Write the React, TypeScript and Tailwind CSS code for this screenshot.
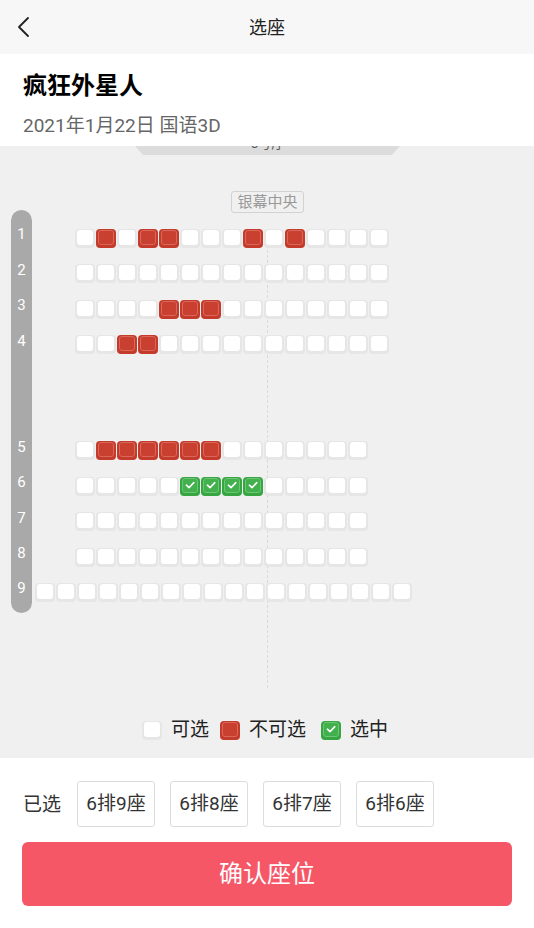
import React from 'react';

type SeatState = 0 | 1 | 2;

interface RowDef {
  label: string;
  count: number;
  sold?: number[];
  picked?: number[];
  wide?: boolean;
}

const rows: RowDef[] = [
  { label: '1', count: 15, sold: [1, 3, 4, 8, 10] },
  { label: '2', count: 15 },
  { label: '3', count: 15, sold: [4, 5, 6] },
  { label: '4', count: 15, sold: [2, 3] },
  { label: '5', count: 14, sold: [1, 2, 3, 4, 5, 6] },
  { label: '6', count: 14, picked: [5, 6, 7, 8] },
  { label: '7', count: 14 },
  { label: '8', count: 14 },
  { label: '9', count: 18, wide: true },
];

const selected = ['6排9座', '6排8座', '6排7座', '6排6座'];

function Check() {
  return (
    <svg width="12" height="12" viewBox="0 0 12 12" fill="none">
      <path d="M2.4 6.2 L5 8.7 L9.8 3.6" stroke="#ffffff" strokeWidth="1.6" strokeLinecap="round" strokeLinejoin="round" />
    </svg>
  );
}

function Seat({ state }: { state: SeatState }) {
  if (state === 1) {
    return (
      <div className="w-[20px] h-[19px] rounded-[4px] bg-[#c43a2b] flex justify-center pt-[1px]">
        <div className="w-[16px] h-[15px] rounded-[3px] bg-[#c93f30] border border-[#d9685a]" />
      </div>
    );
  }
  if (state === 2) {
    return (
      <div className="w-[20px] h-[19px] rounded-[4px] bg-[#36a542] flex justify-center pt-[1px]">
        <div className="w-[16px] h-[15px] rounded-[3px] bg-[#41b04d] border border-[#6cc675] flex items-center justify-center">
          <Check />
        </div>
      </div>
    );
  }
  return (
    <div className="w-[20px] h-[19px] rounded-[4px] bg-[#e6e6e6] flex justify-center pt-[1px]">
      <div className="w-[16px] h-[15px] rounded-[3px] bg-white" />
    </div>
  );
}

function SeatRow({ row }: { row: RowDef }) {
  const seats: SeatState[] = Array.from({ length: row.count }, (_, i) => {
    if (row.sold?.includes(i)) return 1;
    if (row.picked?.includes(i)) return 2;
    return 0;
  });
  return (
    <div className={`h-[35.4px] flex gap-[1px] ${row.wide ? 'pl-[35px]' : 'pl-[75px]'}`}>
      {seats.map((s, i) => (
        <Seat key={i} state={s} />
      ))}
    </div>
  );
}

export default function App() {
  const top = rows.slice(0, 4);
  const bottom = rows.slice(4);

  return (
    <div
      className="w-[534px] h-[928px] bg-white flex flex-col overflow-hidden text-[#222]"
      style={{ fontFamily: 'Roboto, "Noto Sans CJK SC", sans-serif' }}
    >
      {/* nav bar */}
      <div className="h-[54px] bg-[#f7f7f7] flex items-center relative shrink-0">
        <button className="pl-[15px] pr-2 h-full flex items-center">
          <svg width="16" height="22" viewBox="0 0 16 22" fill="none">
            <path d="M13 2 L4 11 L13 20" stroke="#222" strokeWidth="1.8" strokeLinecap="round" strokeLinejoin="round" />
          </svg>
        </button>
        <div className="absolute inset-0 flex items-center justify-center text-[18px] pointer-events-none">选座</div>
      </div>

      {/* movie info */}
      <div className="h-[92px] px-[23px] pt-[14px] shrink-0">
        <div className="text-[24px] font-bold leading-[36px] text-black">疯狂外星人</div>
        <div className="text-[19px] leading-[28px] mt-[8px] text-[#666]">2021年1月22日 国语3D</div>
      </div>

      {/* seat map */}
      <div className="h-[612px] bg-[#f0f0f0] relative flex flex-col items-stretch shrink-0">
        <div className="flex justify-center">
          <div className="w-[265px] h-[9px] bg-[#dcdcdc] overflow-hidden [clip-path:polygon(0_0,100%_0,97%_100%,3%_100%)] flex justify-center ml-[1px]">
            <span className="text-[13px] leading-[16px] -mt-[10px] text-[#555]">5号厅</span>
          </div>
        </div>

        <div className="flex justify-center mt-[36px] pl-[1px]">
          <div className="h-[22px] w-[73px] border border-[#d2d2d2] rounded-[3px] text-[15px] leading-[20px] text-[#999] text-center">
            银幕中央
          </div>
        </div>

        {/* center line */}
        <div className="absolute left-[267px] top-[99px] h-[443px] border-l border-dashed border-[#dadada]" />

        {/* row labels */}
        <div className="absolute left-[11px] top-[64px] w-[21px] h-[403px] rounded-full bg-[#a9a9a9] flex flex-col pt-[7px] text-white text-[15px] items-center">
          {top.map((r) => (
            <div key={r.label} className="h-[35.4px] flex items-center">{r.label}</div>
          ))}
          <div className="h-[70.8px]" />
          {bottom.map((r) => (
            <div key={r.label} className="h-[35.4px] flex items-center">{r.label}</div>
          ))}
        </div>

        <div className="relative mt-[16px] flex flex-col">
          {top.map((r) => (
            <SeatRow key={r.label} row={r} />
          ))}
          <div className="h-[70.8px]" />
          {bottom.map((r) => (
            <SeatRow key={r.label} row={r} />
          ))}
        </div>

        {/* legend */}
        <div className="mt-auto mb-[16px] flex items-center justify-center gap-[9px] text-[19px] leading-[24px] text-[#222] pr-[4px]">
          <Seat state={0} />
          <span className="mr-[2px]">可选</span>
          <Seat state={1} />
          <span className="mr-[6px]">不可选</span>
          <Seat state={2} />
          <span>选中</span>
        </div>
      </div>

      {/* bottom */}
      <div className="flex-1 bg-white px-[22px] pt-[23px]">
        <div className="flex items-center">
          <span className="text-[19px] text-[#333] w-[55px] pl-[1px] pt-[2px]">已选</span>
          <div className="flex gap-[15px]">
            {selected.map((s) => (
              <div
                key={s}
                className="h-[46px] w-[78px] border border-[#dcdcdc] rounded-[3px] flex items-center justify-center text-[19px] text-[#333]"
              >
                {s}
              </div>
            ))}
          </div>
        </div>
        <button className="mt-[15px] w-[490px] h-[64px] rounded-[6px] bg-[#f55767] text-white text-[24px] flex items-center justify-center">
          确认座位
        </button>
      </div>
    </div>
  );
}
